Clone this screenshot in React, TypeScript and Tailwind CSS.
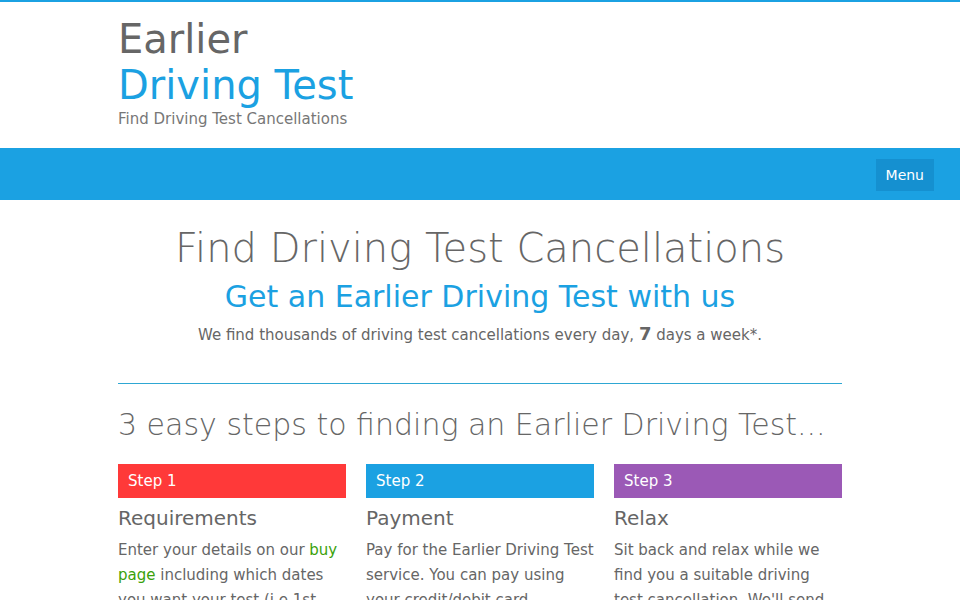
export default function App() {
  const font = { fontFamily: '"DejaVu Sans", sans-serif' };
  return (
    <div className="min-h-screen border-t-2 border-[#1ba1e2] bg-white text-[#666]" style={font}>
      <header className="mx-auto w-[724px] pt-[14px] pb-[19px]">
        <div className="text-[40px] leading-[46px] text-[#666]">Earlier</div>
        <div className="text-[40px] leading-[46px] text-[#1ba1e2]">Driving Test</div>
        <div className="mt-[1px] text-[15px] leading-[20px] text-[#777]">Find Driving Test Cancellations</div>
      </header>
      <nav className="flex h-[52px] items-center justify-end bg-[#1ba1e2] px-[26px] pt-[2px]">
        <button className="h-[32px] bg-[#1590d0] px-[10px] text-[14px] text-white">Menu</button>
      </nav>
      <main className="mx-auto w-[724px]">
        <section className="pt-[23px] text-center">
          <h1 className="h-[50px] text-[40px] font-extralight leading-[50px] text-[#666]">Find Driving Test Cancellations</h1>
          <h2 className="mt-[4px] h-[40px] text-[30px] leading-[40px] text-[#1ba1e2]">Get an Earlier Driving Test with us</h2>
          <p className="mt-[6px] h-[24px] text-[15px] leading-[24px] text-[#666]">
            We find thousands of driving test cancellations every day, <b className="text-[18px] leading-[20px]">7</b> days a week*.
          </p>
        </section>
        <div className="mt-[36px] h-px bg-[#2ea7d3]" />
        <h2 className="mt-[21px] whitespace-nowrap text-[30px] font-extralight leading-[40px] text-[#666]">
          3 easy steps to finding an Earlier Driving Test...
        </h2>
        <div className="mt-[19px] grid grid-cols-3 gap-[20px]">
          <Step n="1" color="bg-[#ff3939]" title="Requirements">
            Enter your details on our <span className="text-[#3aa10a]">buy page</span> including which dates you want your test (i.e 1st
          </Step>
          <Step n="2" color="bg-[#1ba1e2]" title="Payment">
            Pay for the Earlier Driving Test service. You can pay using your credit/debit card
          </Step>
          <Step n="3" color="bg-[#9b59b6]" title="Relax">
            Sit back and relax while we find you a suitable driving test cancellation. We'll send
          </Step>
        </div>
      </main>
    </div>
  );
}

function Step({ n, color, title, children }: { n: string; color: string; title: string; children: React.ReactNode }) {
  return (
    <div>
      <div className={`${color} h-[34px] px-[10px] text-[15px] leading-[34px] text-white`}>Step {n}</div>
      <h3 className="mt-[7px] text-[20px] leading-[26px] text-[#666]">{title}</h3>
      <p className="mt-[7px] text-[15px] leading-[25px] text-[#666]">{children}</p>
    </div>
  );
}
